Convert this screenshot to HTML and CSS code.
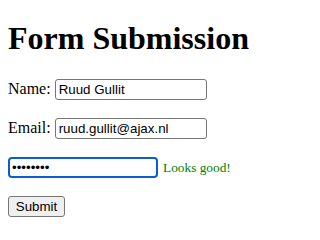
FILE: index.html
```html
<!DOCTYPE html>
<html>
<head>
<meta charset="utf-8">
<title>Form Submission</title>
<link rel="stylesheet" href="styles.css">
</head>
<body>
<h1 class="title">Form Submission</h1>
<form class="form">
  <div class="row"><label for="name">Name:</label><input class="field" id="name" type="text" value="Ruud Gullit"></div>
  <div class="row"><label for="email">Email:</label><input class="field" id="email" type="email" value="ruud.gullit@ajax.nl"></div>
  <div class="row"><input class="field field-focus" id="pw" type="password" value="12345678"><small class="valid">Looks good!</small></div>
  <div class="row"><button class="btn" type="button">Submit</button></div>
</form>
</body>
</html>
```
FILE: styles.css
```css
html, body {
  background: #ffffff;
}
body {
  margin: 0;
  padding: 20px 8px 0;
  font-family: "Liberation Serif", "Times New Roman", serif;
  font-size: 16px;
  color: #000000;
}
.title {
  font-size: 32px;
  line-height: 37px;
  font-weight: bold;
  margin: 0;
}
.form {
  margin: 22px 0 0;
  display: flex;
  flex-direction: column;
  gap: 16px;
}
.row {
  display: flex;
  align-items: baseline;
  gap: 4px;
  height: 23px;
}
.field {
  box-sizing: border-box;
  width: 152px;
  height: 21px;
  padding: 1px 3px;
  border: 1px solid #767676;
  border-radius: 3px;
  background: #ffffff;
  font-family: "Liberation Sans", Arial, sans-serif;
  font-size: 13.33px;
  color: #000000;
}
.field-focus {
  width: 150px;
  border: 2px solid #0b5fcc;
  border-radius: 4px;
  outline: none;
  padding: 0 2px;
}
.valid {
  color: #008000;
  font-size: 13.33px;
  margin-left: 1px;
}
.btn {
  box-sizing: border-box;
  width: 57px;
  height: 21px;
  padding: 1px 6px;
  border: 1px solid #767676;
  border-radius: 3px;
  background: #efefef;
  font-family: "Liberation Sans", Arial, sans-serif;
  font-size: 13.33px;
  color: #000000;
}
```
